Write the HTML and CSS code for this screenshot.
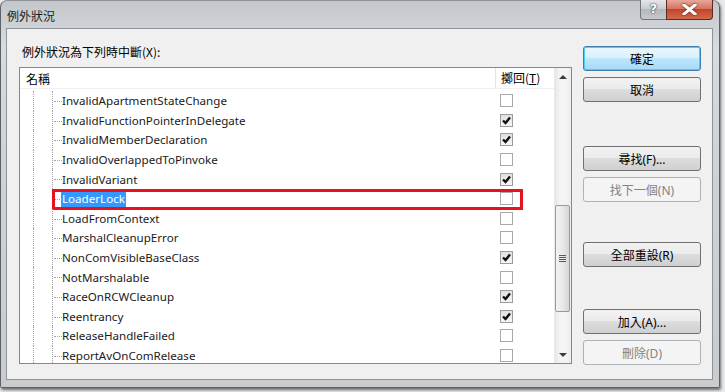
FILE: index.html
```html
<!DOCTYPE html>
<html lang="zh-Hant">
<head>
    <meta charset="UTF-8">
    <title>例外狀況</title>
    <link rel="stylesheet" href="styles.css">
</head>
<body>

<div class="window">
    <div class="titlebar">
        <span class="title">例外狀況</span>
        <div class="caption-buttons">
            <div class="cap-help">?</div>
            <div class="cap-close">
                <svg width="15" height="11" viewBox="0 0 15 11"><path d="M2 1 L13 10 M13 1 L2 10" stroke="#fff" stroke-width="3" stroke-linecap="square"/></svg>
            </div>
        </div>
    </div>

    <div class="client">
        <div class="left-panel">
            <div class="prompt">例外狀況為下列時中斷(X):</div>
            <div class="list">
                <div class="list-main">
                    <div class="list-header">
                        <div class="col-name">名稱</div>
                        <div class="col-throw">擲回(<u>T</u>)</div>
                    </div>
                    <div class="rows" id="rows"></div>
                </div>
                <div class="scrollbar">
                    <div class="sb-btn"><span class="arrow-up"></span></div>
                    <div class="sb-track">
                        <div class="sb-thumb"><span class="grip"></span></div>
                    </div>
                    <div class="sb-btn"><span class="arrow-down"></span></div>
                </div>
            </div>
        </div>

        <div class="button-column">
            <button class="btn btn-default">確定</button>
            <button class="btn gap-small">取消</button>
            <button class="btn gap-find">尋找(F)...</button>
            <button class="btn gap-small" disabled>找下一個(N)</button>
            <button class="btn gap-reset">全部重設(R)</button>
            <button class="btn gap-add">加入(A)...</button>
            <button class="btn gap-small" disabled>刪除(D)</button>
        </div>
    </div>
</div>

<script>
// exception names and whether "throw" is checked
const exceptions = [
    ['InvalidApartmentStateChange', false],
    ['InvalidFunctionPointerInDelegate', true],
    ['InvalidMemberDeclaration', true],
    ['InvalidOverlappedToPinvoke', false],
    ['InvalidVariant', true],
    ['LoaderLock', false],
    ['LoadFromContext', false],
    ['MarshalCleanupError', false],
    ['NonComVisibleBaseClass', true],
    ['NotMarshalable', false],
    ['RaceOnRCWCleanup', true],
    ['Reentrancy', true],
    ['ReleaseHandleFailed', false],
    ['ReportAvOnComRelease', false]
];

const checkSvg = '<svg width="11" height="11" viewBox="0 0 11 11"><path d="M2 5.5 L4.5 8 L9 2.5" fill="none" stroke="#111" stroke-width="2.4"/></svg>';

const rowsEl = document.getElementById('rows');
exceptions.forEach(([name, checked]) => {
    const row = document.createElement('div');
    row.className = 'row';
    const selected = name === 'LoaderLock';
    row.innerHTML = `
        <span class="guide-outer"></span>
        <span class="guide-inner"></span>
        <span class="row-name"><span class="${selected ? 'label selected' : 'label'}">${name}</span></span>
        <span class="row-check"><span class="checkbox ${checked ? 'checked' : ''}">${checked ? checkSvg : ''}</span></span>
        ${selected ? '<span class="mark"></span>' : ''}
    `;
    rowsEl.appendChild(row);
});
</script>

</body>
</html>
```

FILE: styles.css
```css
* {
    box-sizing: border-box;
}
body {
    margin: 0;
    width: 725px;
    height: 392px;
    overflow: hidden;
    background: #e9eaec;
    font-family: "Noto Sans", "Noto Sans CJK TC", sans-serif;
    font-size: 12px;
    color: #000;
}
.window {
    width: 720px;
    height: 388px;
    padding: 0 6px 7px 5px;
    background: linear-gradient(180deg, #c3c7cb 0%, #d9dcdf 12%, #cfd2d6 40%, #c9cccf 100%);
    border: 1px solid #5d6166;
    border-top-color: #8d9196;
    border-radius: 7px 7px 2px 2px;
    box-shadow: 1px 2px 3px rgba(0, 0, 0, 0.55);
    display: flex;
    flex-direction: column;
}
.titlebar {
    height: 27px;
    display: flex;
    align-items: flex-start;
}
.title {
    margin-top: 6px;
    margin-left: 1px;
    font-family: "Noto Sans CJK TC", sans-serif;
    font-size: 12px;
    color: #1e1e1e;
}
.caption-buttons {
    margin-left: auto;
    margin-top: -1px;
    display: flex;
}
.cap-help {
    width: 26px;
    height: 20px;
    border: 1px solid #6f7479;
    border-top: none;
    border-right: none;
    border-radius: 0 0 0 4px;
    background: linear-gradient(180deg, #e4e6e8 0%, #c9cdd1 45%, #b3b8bd 50%, #c6cacd 100%);
    color: #fff;
    font-family: "DejaVu Sans", sans-serif;
    font-weight: bold;
    font-size: 13px;
    text-align: center;
    line-height: 18px;
    text-shadow: 0 0 2px #333, 0 0 1px #333;
}
.cap-close {
    width: 47px;
    height: 20px;
    border: 1px solid #5c2a20;
    border-top: none;
    border-radius: 0 0 4px 0;
    background: linear-gradient(180deg, #e8a898 0%, #d47561 45%, #c4452c 50%, #d26a4c 100%);
    display: flex;
    align-items: center;
    justify-content: center;
}
.cap-close svg {
    filter: drop-shadow(0 0 1px #5a1a0e);
}
.client {
    flex: 1;
    background: #f0f0f0;
    border: 1px solid #8e9398;
    display: flex;
    padding-right: 11px;
}
.left-panel {
    padding-left: 12px;
    padding-top: 15px;
}
.prompt {
    font-family: "Noto Sans CJK TC", sans-serif;
    line-height: 16px;
    padding-left: 3px;
    height: 23px;
}
.list {
    width: 553px;
    height: 297px;
    border: 1px solid #828790;
    background: #fff;
    display: flex;
}
.list-main {
    flex: 1;
    display: flex;
    flex-direction: column;
    overflow: hidden;
}
.list-header {
    height: 21px;
    display: flex;
    align-items: center;
    border-bottom: 1px solid #eef0f2;
    font-family: "Noto Sans CJK TC", sans-serif;
}
.col-name {
    width: 475px;
    padding-left: 6px;
}
.col-throw {
    height: 100%;
    padding-left: 5px;
    border-left: 1px solid #e5e5e5;
    line-height: 20px;
}
.rows {
    padding-top: 2px;
    flex: 1;
    overflow: hidden;
}
.row {
    height: 19.6px;
    display: flex;
    align-items: center;
    position: relative;
}
.guide-outer {
    align-self: stretch;
    margin-left: 13px;
    width: 19px;
    border-left: 1px dotted #a5a5a5;
}
.guide-inner {
    align-self: stretch;
    width: 9px;
    border-left: 1px dotted #a5a5a5;
    position: relative;
}
.guide-inner::after {
    content: "";
    position: absolute;
    left: 1px;
    top: 10px;
    width: 8px;
    border-top: 1px dotted #a5a5a5;
}
.row-name {
    width: 434px;
}
.label {
    padding: 1px 1px 2px 1px;
    font-size: 11.6px;
    line-height: 16px;
    color: #1a1a1a;
}
.label.selected {
    background: #3399ff;
    color: #fff;
}
.row-check {
    padding-left: 5px;
    display: flex;
}
.checkbox {
    width: 13px;
    height: 13px;
    border: 1px solid #a9a9a9;
    background: #fff;
    display: flex;
    align-items: center;
    justify-content: center;
}
.checkbox.checked {
    background: linear-gradient(180deg, #e0e0e0, #f6f6f6);
    border-color: #9c9c9c;
}
.mark {
    position: absolute;
    left: 32px;
    top: 0;
    width: 471px;
    height: 21px;
    border: 3px solid #e8121f;
}
.scrollbar {
    width: 17px;
    display: flex;
    flex-direction: column;
    background: linear-gradient(90deg, #e6e6e6, #f4f4f4 30%, #f4f4f4 70%, #ebebeb);
    border-left: 1px solid #eaeaea;
}
.sb-btn {
    height: 17px;
    display: flex;
    align-items: center;
    justify-content: center;
}
.arrow-up {
    width: 0;
    height: 0;
    border-left: 4px solid transparent;
    border-right: 4px solid transparent;
    border-bottom: 4px solid #3c3c3c;
}
.arrow-down {
    width: 0;
    height: 0;
    border-left: 4px solid transparent;
    border-right: 4px solid transparent;
    border-top: 4px solid #3c3c3c;
}
.sb-track {
    flex: 1;
}
.sb-thumb {
    margin-top: 120px;
    width: 15px;
    height: 107px;
    border: 1px solid #9a9a9a;
    border-radius: 2px;
    background: linear-gradient(90deg, #f3f3f3, #e8e8e8 50%, #d6d6d6);
    display: flex;
    align-items: center;
    justify-content: center;
}
.grip {
    width: 7px;
    height: 7px;
    background: repeating-linear-gradient(180deg, #5a5a5a 0, #5a5a5a 1px, transparent 1px, transparent 2px);
}
.button-column {
    margin-left: auto;
    width: 118px;
    padding-top: 17px;
    display: flex;
    flex-direction: column;
}
.btn {
    height: 25px;
    width: 118px;
    border: 1px solid #707070;
    border-radius: 3px;
    background: linear-gradient(180deg, #f2f2f2 0%, #ebebeb 49%, #dddddd 50%, #cfcfcf 100%);
    font-family: "Noto Sans", "Noto Sans CJK TC", sans-serif;
    font-size: 12px;
    color: #000;
    padding: 0;
}
.btn-default {
    border-color: #3c7fb1;
    background: linear-gradient(180deg, #eaf6fd 0%, #d9f0fc 49%, #bee6fd 50%, #a7d9f5 100%);
    box-shadow: inset 0 0 0 1px #48d0f6;
}
.btn:disabled {
    border-color: #adb2b5;
    background: #f4f4f4;
    color: #838383;
}
.gap-small {
    margin-top: 6px;
}
.gap-find {
    margin-top: 44px;
}
.gap-reset {
    margin-top: 40px;
}
.gap-add {
    margin-top: 42px;
}
```
